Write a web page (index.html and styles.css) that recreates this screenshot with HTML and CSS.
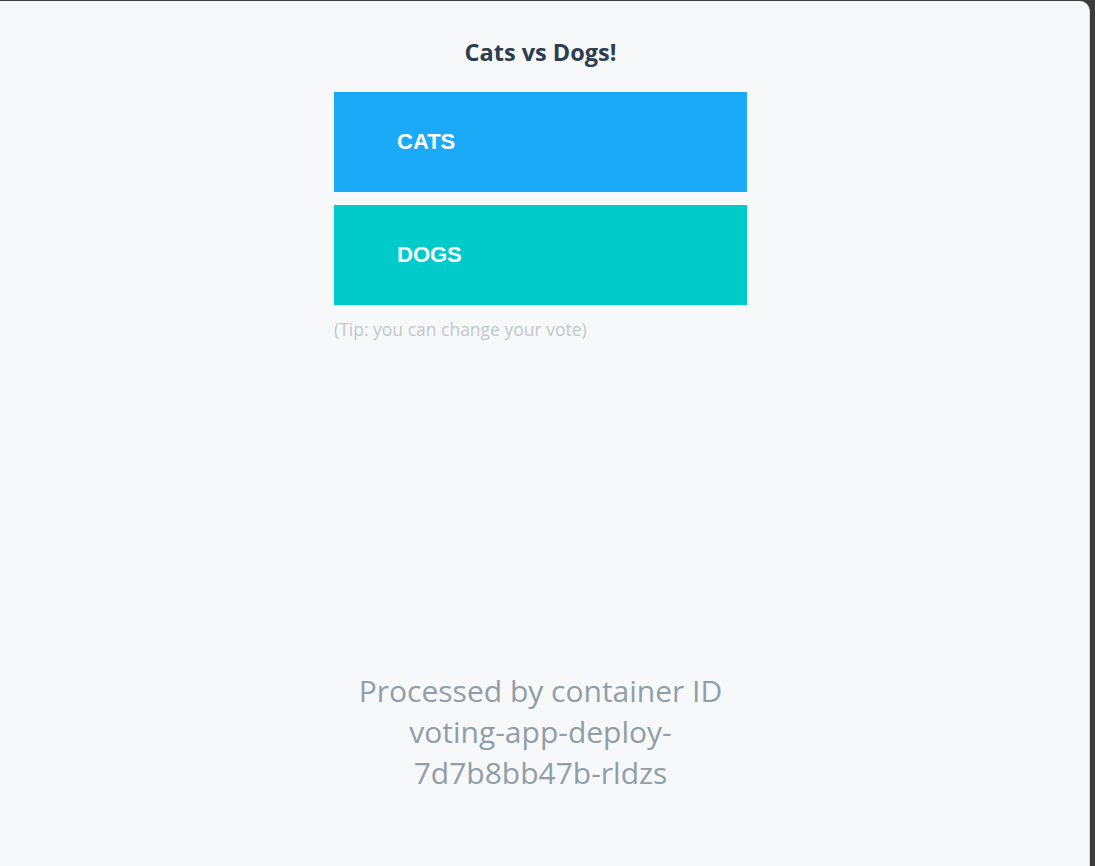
FILE: index.html
```html
<!DOCTYPE html>
<html>
<head>
<meta charset="utf-8">
<title>Cats vs Dogs!</title>
<link rel="stylesheet" href="styles.css">
</head>
<body>
<div class="window">
  <main class="content">
    <h3 class="title">Cats vs Dogs!</h3>
    <form class="choices">
      <button type="button" class="vote vote-a">CATS</button>
      <button type="button" class="vote vote-b">DOGS</button>
    </form>
    <div class="tip">(Tip: you can change your vote)</div>
    <div class="hostname">Processed by container ID voting-app-deploy-7d7b8bb47b-rldzs</div>
  </main>
</div>
</body>
</html>
```

FILE: styles.css
```css
html, body {
  margin: 0;
  padding: 0;
  height: 100%;
}
body {
  background: #3c3c3c;
  font-family: "Open Sans", sans-serif;
}
.window {
  box-sizing: border-box;
  width: 1090px;
  height: 866px;
  margin-top: 1px;
  background: #f7f8f9;
  border-right: 1px solid #d6d8da;
  border-top-right-radius: 10px;
  display: flex;
  justify-content: center;
  padding-right: 8px;
}
.content {
  width: 413px;
  display: flex;
  flex-direction: column;
}
.title {
  margin: 36px 0 0;
  font-size: 23.5px;
  line-height: 30px;
  font-weight: 700;
  color: #2c3e50;
  text-align: center;
}
.choices {
  margin-top: 25px;
  display: flex;
  flex-direction: column;
  gap: 13px;
}
.vote {
  display: block;
  width: 100%;
  height: 100px;
  border: 0;
  border-radius: 0;
  padding: 0 0 0 63px;
  text-align: left;
  font-family: "Liberation Sans", Arial, sans-serif;
  font-size: 22px;
  font-weight: 700;
  color: #ffffff;
  cursor: pointer;
}
.vote-a { background: #1aaaf8; }
.vote-b { background: #00cbca; }
.tip {
  margin-top: 12px;
  font-size: 17.5px;
  line-height: 24px;
  color: #c0c9ce;
}
.hostname {
  margin-top: auto;
  margin-bottom: 74px;
  font-size: 30px;
  line-height: 41px;
  color: #8f9ea8;
  text-align: center;
}
```
